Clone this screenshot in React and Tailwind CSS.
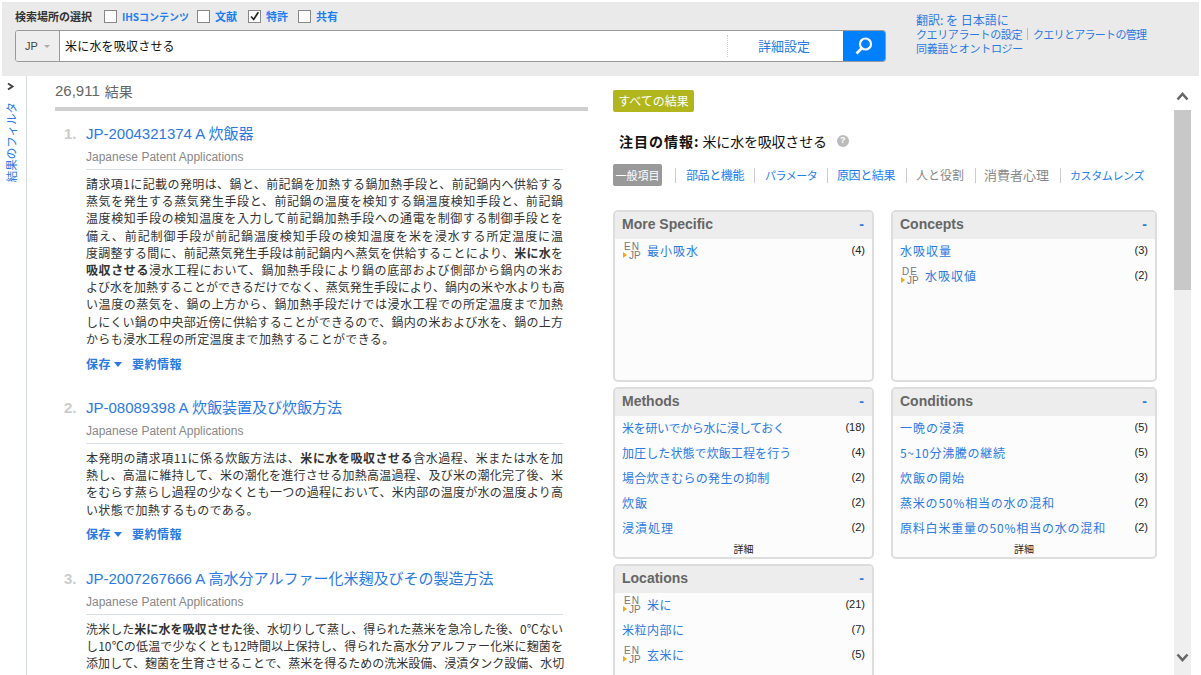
const blue = "text-[#2a7ae2]";

function EnJp({ from = "EN" }) {
  return (
    <span className="relative mr-[6px] inline-flex h-[19px] w-[18px] shrink-0 flex-col pt-[1px] font-['Liberation_Sans',sans-serif] text-[10px] leading-[9px] text-[#777]">
      <span className="pl-[1px] tracking-[1px]">{from}</span>
      <span className="pl-[6px]">JP</span>
      <span className="absolute bottom-[2px] left-[0px] h-0 w-0 border-y-[3.5px] border-l-[4px] border-y-transparent border-l-[#f5a80f]" />
    </span>
  );
}

function Row({ label, count, flag, track = "" }) {
  return (
    <div className="flex h-[25px] items-center px-[7px]">
      {flag && (
        <span className="ml-[1px] flex">
          <EnJp from={flag} />
        </span>
      )}
      <span className={`flex-1 whitespace-nowrap text-[12px] ${track} ${blue}`}>{label}</span>
      <span className="font-['Liberation_Sans',sans-serif] text-[11px] text-[#222]">{count}</span>
    </div>
  );
}

function Panel({ title, rows, more, cut }) {
  return (
    <div
      className={`flex h-[172px] flex-col border-x-2 border-[#ddd] bg-[#fcfcfc] ${
        cut ? "rounded-t-[5px] border-t-2" : "rounded-[5px] border-y-2"
      }`}
    >
      <div className="flex h-[27px] shrink-0 items-center justify-between rounded-t-[4px] bg-[#ededed] px-[7px] pb-[2px] font-['Liberation_Sans',sans-serif] text-[14px] font-bold text-[#666]">
        <span>{title}</span>
        <span className={`pr-[1px] ${blue}`}>-</span>
      </div>
      <div className="-mt-[1px] flex-1">
        {rows.map((r) => (
          <Row key={r[0]} label={r[0]} count={r[1]} flag={r[2]} track={r[3]} />
        ))}
      </div>
      {more && <div className="pb-[1px] text-center text-[10px] leading-[14px] text-[#222]">詳細</div>}
    </div>
  );
}

function Check({ label, checked, size = "text-[11px]" }) {
  return (
    <span className="flex items-center">
      <span className="flex h-[13px] w-[13px] items-center justify-center border border-[#888] bg-white">
        {checked && (
          <svg width="13" height="13" viewBox="0 0 13 13">
            <path d="M2.5 6.5 L5.5 10 L11 1.5" fill="none" stroke="#222" strokeWidth="2" />
          </svg>
        )}
      </span>
      <span className={`ml-[5px] font-bold text-[#1c7ef0] ${size}`}>{label}</span>
    </span>
  );
}

function Actions() {
  return (
    <div className={`mt-[8px] flex h-[17px] items-center pl-[31px] text-[12px] font-bold tracking-[0.5px] ${blue}`}>
      <span>保存</span>
      <span className="ml-[3px] mt-[1px] h-0 w-0 border-x-[4.5px] border-t-[5px] border-x-transparent border-t-[#2a7ae2]" />
      <span className="ml-[10px]">要約情報</span>
    </div>
  );
}

function Result({ n, title, lines, actions = true, mb, full }) {
  return (
    <div className={mb}>
      <div className="flex h-[22px] items-center text-[15px]">
        <span className="w-[31px] pl-[9px] font-['Liberation_Sans',sans-serif] font-bold text-[#ccc]">{n}.</span>
        <span className={`font-['Liberation_Sans','Noto_Sans_CJK_JP',sans-serif] ${blue}`}>{title}</span>
      </div>
      <div className="ml-[31px] mt-[1px] h-[24px] w-[477px] border-b border-[#d8dfeb] font-['Liberation_Sans',sans-serif] text-[12px] leading-[22px] text-[#888]">
        Japanese Patent Applications
      </div>
      <div className="ml-[31px] mt-[5px] w-[477px] text-[12px] leading-[17.2px] text-[#333]">
        {lines.map((l, i) => (
          <div
            key={i}
            className={
              i < lines.length - 1 || full
                ? "whitespace-nowrap text-justify [text-align-last:justify]"
                : "whitespace-nowrap tracking-[0.35px]"
            }
          >
            {l}
          </div>
        ))}
      </div>
      {actions && <Actions />}
    </div>
  );
}

const B = ({ children }) => <b className="font-bold">{children}</b>;

function Sep({ l = "ml-[11px]", r = "mr-[10px]" }) {
  return <span className={`h-[15px] w-px shrink-0 bg-[#ccc] ${l} ${r}`} />;
}

function Chevron({ up }) {
  return (
    <svg width="13" height="9" viewBox="0 0 13 9">
      <path d={up ? "M1.5 7.5 L6.5 2 L11.5 7.5" : "M1.5 1.5 L6.5 7 L11.5 1.5"} fill="none" stroke="#666" strokeWidth="2.6" />
    </svg>
  );
}

export default function App() {
  return (
    <div className="h-[675px] w-[1201px] overflow-hidden bg-white pt-[2px] font-['Noto_Sans_CJK_JP','Liberation_Sans',sans-serif]">
      <header className="mx-[2px] flex h-[74px] bg-[#eaeaea]">
        <div className="w-[884px] pl-[13px] pt-[7px]">
          <div className="flex h-[14px] items-center">
            <span className="w-[89px] text-[11px] font-bold text-[#333]">検索場所の選択</span>
            <span className="w-[93px]"><Check label="IHSコンテンツ" size="text-[10px]" /></span>
            <span className="w-[51px]"><Check label="文献" /></span>
            <span className="w-[50px]"><Check label="特許" checked /></span>
            <Check label="共有" />
          </div>
          <div className="mt-[7px] flex h-[32px] overflow-hidden rounded-[3px] border border-[#999] bg-white">
            <div className="flex w-[44px] shrink-0 items-center justify-center border-r border-[#999] bg-[#eeeeee] font-['Liberation_Sans',sans-serif] text-[11px] text-[#444]">
              JP
              <span className="ml-[6px] h-0 w-0 border-x-[3px] border-t-[3px] border-x-transparent border-t-[#aaa]" />
            </div>
            <div className="flex flex-1 items-center pl-[5px] text-[12px] tracking-[0.2px] text-[#111]">米に水を吸収させる</div>
            <div className="my-[4px] flex w-[116px] items-center justify-center border-l border-dotted border-[#ccc] pr-[3px] text-[13px] text-[#2a7ae2]">
              詳細設定
            </div>
            <div className="flex w-[42px] items-center justify-center bg-[#0080ff]">
              <svg width="20" height="20" viewBox="0 0 20 20">
                <circle cx="11.5" cy="8" r="5.5" fill="none" stroke="#fff" strokeWidth="2.2" />
                <path d="M7.5 12.5 L2.5 17.5" stroke="#fff" strokeWidth="2.6" />
              </svg>
            </div>
          </div>
        </div>
        <div className={`ml-[30px] pt-[11px] text-[12px] leading-[14px] ${blue}`}>
          <div>翻訳: を 日本語に</div>
          <div className="flex items-center whitespace-nowrap text-[11px]">
            <span className="tracking-[-0.4px]">クエリアラートの設定</span>
            <span className="mx-[5px] h-[12px] w-px bg-[#bbb]" />
            <span className="tracking-[-0.7px]">クエリとアラートの管理</span>
          </div>
          <div className="whitespace-nowrap text-[11px] tracking-[-0.3px]">同義語とオントロジー</div>
        </div>
      </header>

      <div className="flex h-[599px]">
        <aside className="h-full w-[27px] shrink-0 border-r border-[#d5dae0] pl-[6px] pt-[6px]">
          <svg width="9" height="9" viewBox="0 0 9 9">
            <path d="M2 1.5 L6.5 4.5 L2 7.5" fill="none" stroke="#444" strokeWidth="2" />
          </svg>
          <div className={`-ml-[3px] mt-[11px] h-[80px] whitespace-nowrap text-[11.5px] leading-[16px] [writing-mode:sideways-lr] ${blue}`}>
            結果のフィルタ
          </div>
        </aside>

        <main className="ml-[28px] h-full w-[533px] shrink-0 overflow-hidden">
          <div className="flex h-[35px] items-center border-b-4 border-[#cfcfcf] pb-[1px] text-[15px] text-[#666]">
            <span className="font-['Liberation_Sans',sans-serif]">26,911</span>
            <span className="ml-[5px] text-[14px]">結果</span>
          </div>
          <div className="pt-[12px]">
            <Result
              n={1}
              mb="mb-[25px]"
              title="JP-2004321374 A 炊飯器"
              lines={[
                "請求項1に記載の発明は、鍋と、前記鍋を加熱する鍋加熱手段と、前記鍋内へ供給する",
                "蒸気を発生する蒸気発生手段と、前記鍋の温度を検知する鍋温度検知手段と、前記鍋",
                "温度検知手段の検知温度を入力して前記鍋加熱手段への通電を制御する制御手段とを",
                "備え、前記制御手段が前記鍋温度検知手段の検知温度を米を浸水する所定温度に温",
                <>度調整する間に、前記蒸気発生手段は前記鍋内へ蒸気を供給することにより、<B>米に水</B>を</>,
                <><B>吸収させる</B>浸水工程において、鍋加熱手段により鍋の底部および側部から鍋内の米お</>,
                "よび水を加熱することができるだけでなく、蒸気発生手段により、鍋内の米や水よりも高",
                "い温度の蒸気を、鍋の上方から、鍋加熱手段だけでは浸水工程での所定温度まで加熱",
                "しにくい鍋の中央部近傍に供給することができるので、鍋内の米および水を、鍋の上方",
                "からも浸水工程の所定温度まで加熱することができる。",
              ]}
            />
            <Result
              n={2}
              mb="mb-[25px]"
              title="JP-08089398 A 炊飯装置及び炊飯方法"
              lines={[
                <>本発明の請求項11に係る炊飯方法は、<B>米に水を吸収させる</B>含水過程、米または水を加</>,
                "熱し、高温に維持して、米の潮化を進行させる加熱高温過程、及び米の潮化完了後、米",
                "をむらす蒸らし過程の少なくとも一つの過程において、米内部の温度が水の温度より高",
                "い状態で加熱するものである。",
              ]}
            />
            <Result
              n={3}
              actions={false}
              full
              title="JP-2007267666 A 高水分アルファー化米麹及びその製造方法"
              lines={[
                <>洗米した<B>米に水を吸収させた</B>後、水切りして蒸し、得られた蒸米を急冷した後、0℃ない</>,
                "し10℃の低温で少なくとも12時間以上保持し、得られた高水分アルファー化米に麹菌を",
                "添加して、麹菌を生育させることで、蒸米を得るための洗米設備、浸漬タンク設備、水切",
              ]}
            />
          </div>
        </main>

        <section className="ml-[25px] h-full w-[544px] shrink-0 overflow-hidden pt-[14px]">
          <div className="flex h-[22px] w-[81px] items-center justify-center rounded-[2px] bg-[#b0b61b] text-[12px] text-white">
            すべての結果
          </div>
          <div className="mt-[19px] flex h-[20px] items-center whitespace-nowrap pl-[6px] text-[14px] text-[#111]">
            <b className="font-bold tracking-[1px]">注目の情報:</b>
            <span className="ml-[3px] tracking-[-0.2px]">米に水を吸収させる</span>
            <span className="ml-[10px] flex h-[12px] w-[12px] items-center justify-center rounded-full bg-[#bbb] font-['Liberation_Sans',sans-serif] text-[9px] font-bold text-white">
              ?
            </span>
          </div>
          <div className="mt-[13px] flex h-[22px] items-center whitespace-nowrap text-[12px] text-[#1c7ef0]">
            <span className="flex h-[22px] w-[49px] items-center justify-center rounded-[2px] bg-[#999] text-[11px] text-white">一般項目</span>
            <Sep l="ml-[13px]" />
            <span className="w-[58px] tracking-[-0.4px]">部品と機能</span>
            <Sep l="ml-[10px]" />
            <span className="w-[52px] text-[11px] tracking-[-0.5px]">パラメータ</span>
            <Sep l="ml-[10px]" r="mr-[9px]" />
            <span className="w-[58px] tracking-[-0.4px]">原因と結果</span>
            <Sep l="ml-[11px]" r="mr-[9px]" />
            <span className="w-[49px] text-[#888]">人と役割</span>
            <Sep l="ml-[10px]" r="mr-[8px]" />
            <span className="w-[66px] text-[13px] text-[#888]">消費者心理</span>
            <Sep l="ml-[10px]" r="mr-[9px]" />
            <span className="w-[74px] text-[11px] tracking-[-0.4px]">カスタムレンズ</span>
          </div>
          <div className="mt-[24px] grid grid-cols-[261px_266px] gap-x-[17px] gap-y-[5px]">
            <Panel title="More Specific" rows={[["最小吸水", "(4)", "EN", "tracking-[1px]"]]} />
            <Panel
              title="Concepts"
              rows={[
                ["水吸収量", "(3)", null, "tracking-[1px]"],
                ["水吸収値", "(2)", "DE", "tracking-[1px]"],
              ]}
            />
            <Panel
              title="Methods"
              more
              rows={[
                ["米を研いでから水に浸しておく", "(18)", null, "tracking-[-0.3px]"],
                ["加圧した状態で炊飯工程を行う", "(4)", null, "tracking-[0.1px]"],
                ["場合炊きむらの発生の抑制", "(2)", null, "tracking-[0.3px]"],
                ["炊飯", "(2)", null, "tracking-[1px]"],
                ["浸漬処理", "(2)", null, "tracking-[1px]"],
              ]}
            />
            <Panel
              title="Conditions"
              more
              rows={[
                ["一晩の浸漬", "(5)", null, "tracking-[1px]"],
                ["5~10分沸騰の継続", "(5)", null, "tracking-[0.7px]"],
                ["炊飯の開始", "(3)", null, "tracking-[1px]"],
                ["蒸米の50%相当の水の混和", "(2)", null, "tracking-[0.8px]"],
                ["原料白米重量の50%相当の水の混和", "(2)", null, "tracking-[0.8px]"],
              ]}
            />
            <Panel
              title="Locations"
              cut
              rows={[
                ["米に", "(21)", "EN", "tracking-[0.5px]"],
                ["米粒内部に", "(7)", null, "tracking-[0.5px]"],
                ["玄米に", "(5)", "EN", "tracking-[0.5px]"],
              ]}
            />
          </div>
        </section>

        <div className="ml-[17px] flex h-full w-[17px] shrink-0 flex-col bg-[#efefef]">
          <div className="flex h-[34px] items-center justify-center bg-white pt-[6px]">
            <Chevron up />
          </div>
          <div className="h-[180px] bg-[#c8c8c8]" />
          <div className="flex-1" />
          <div className="flex h-[27px] items-start justify-center pt-[5px]">
            <Chevron />
          </div>
        </div>
      </div>
    </div>
  );
}
